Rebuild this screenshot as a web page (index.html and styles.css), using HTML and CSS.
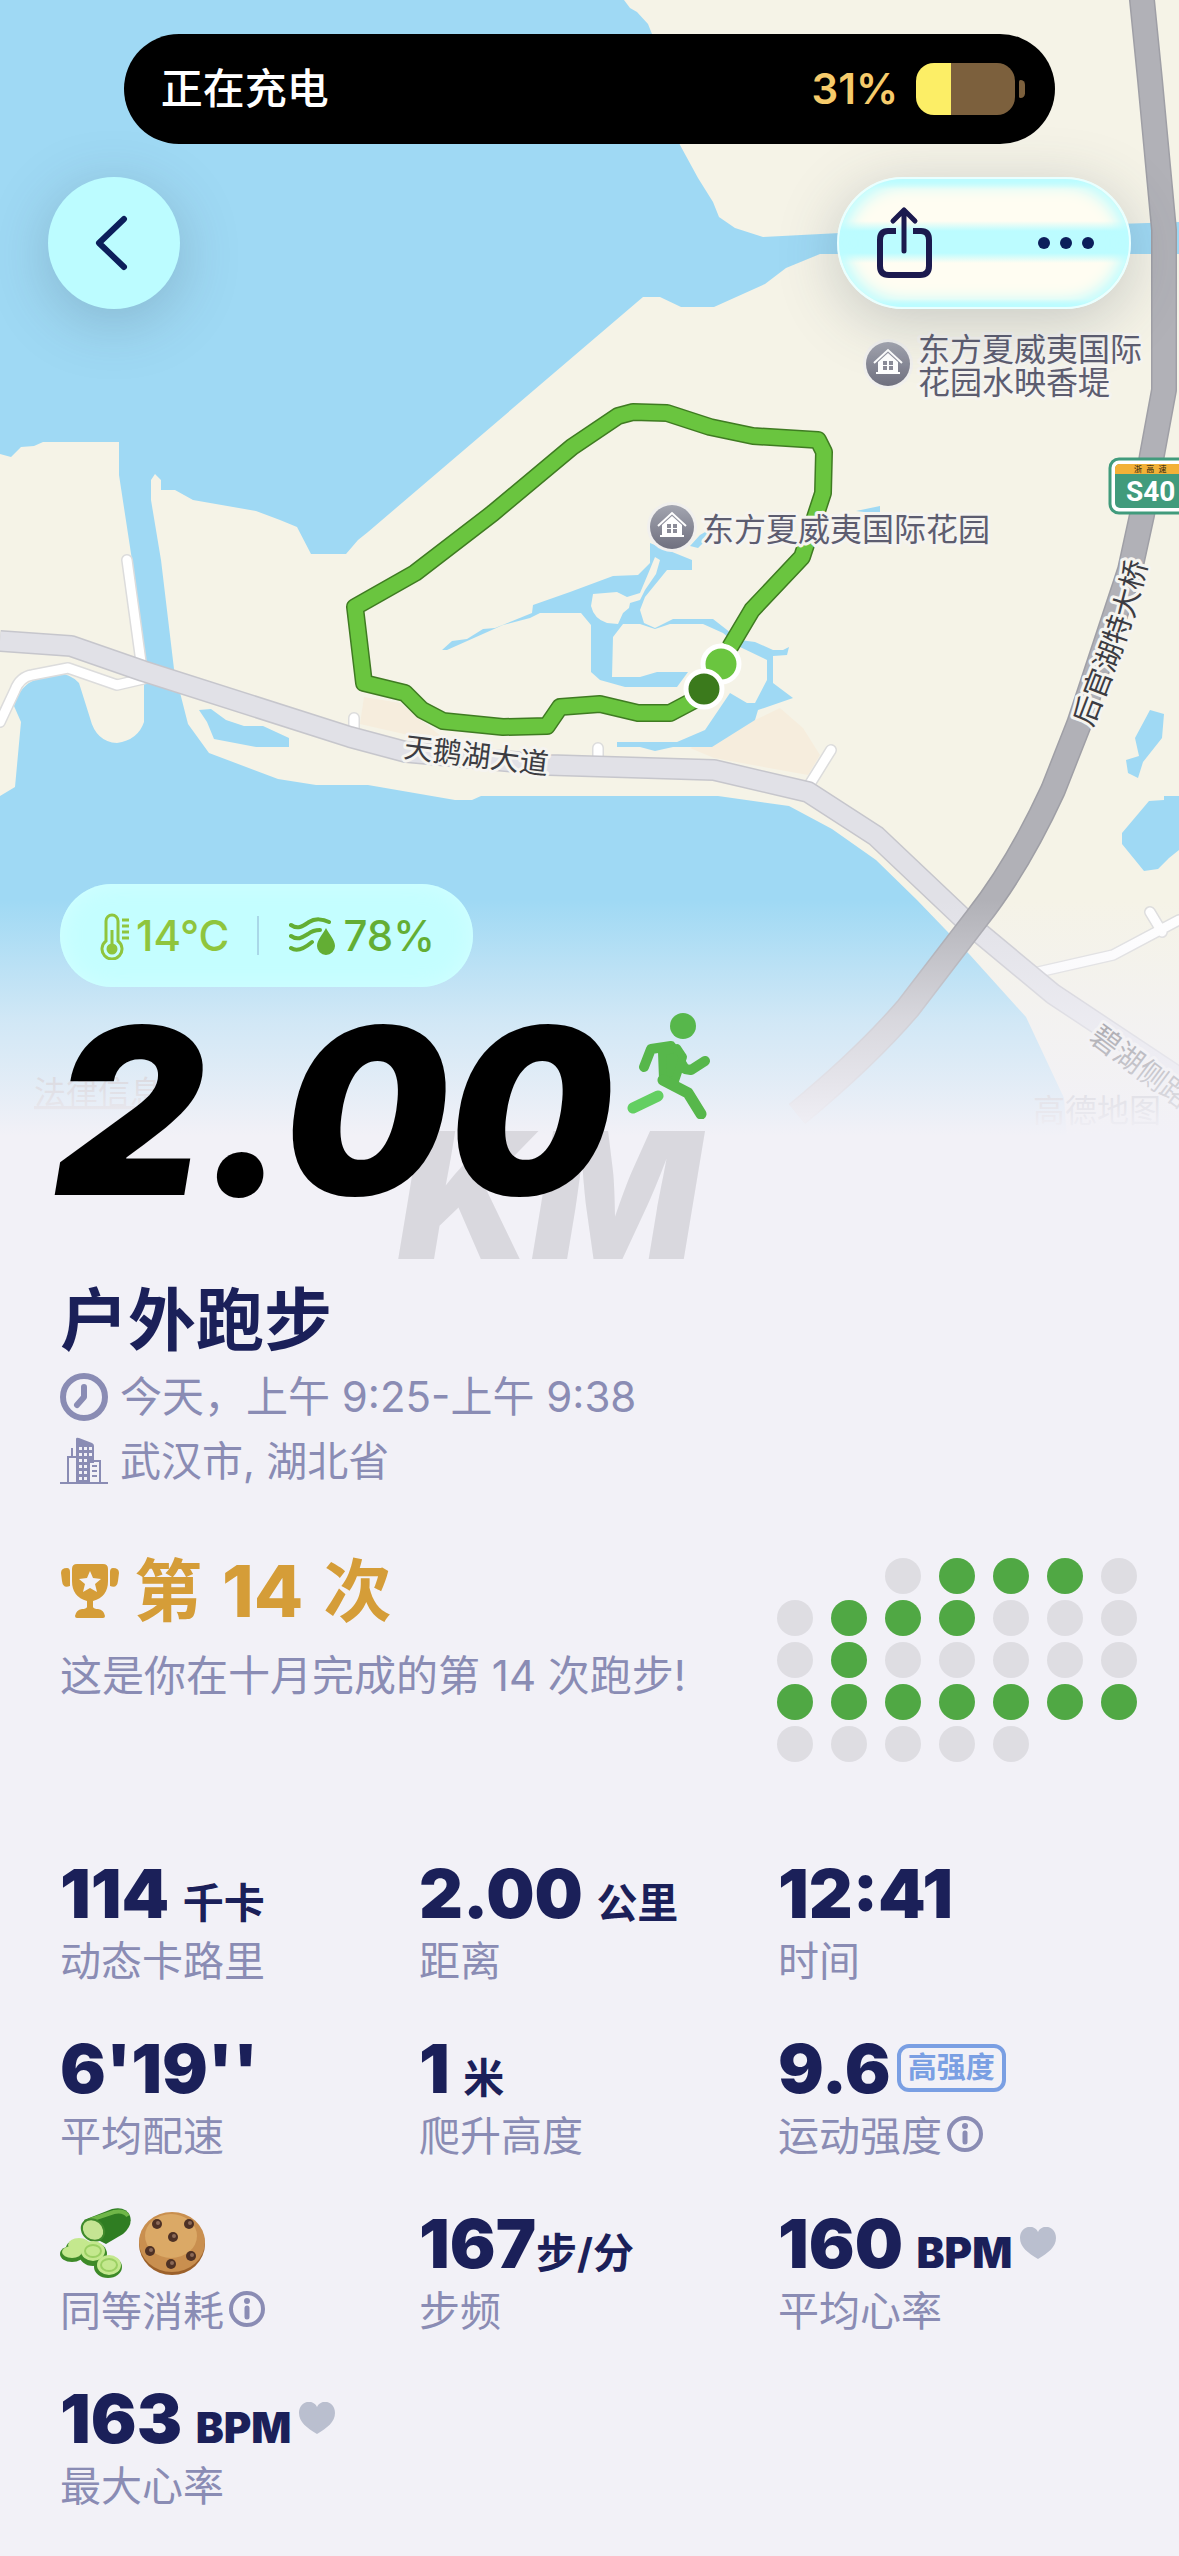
FILE: index.html
```html
<!DOCTYPE html>
<html lang="zh-CN">
<head>
<meta charset="utf-8">
<title>户外跑步</title>
<meta name="viewport" content="width=device-width,initial-scale=1">
<link rel="stylesheet" href="styles.css">
</head>
<body>

<section class="hero">
  <div class="map">
    <svg viewBox="0 0 1179 1180" preserveAspectRatio="xMidYMin slice" role="img" aria-label="跑步路线">
      <defs>
        <linearGradient id="pin" x1="0" y1="0" x2="0" y2="1">
          <stop offset="0" stop-color="#a3a5b0"/><stop offset="1" stop-color="#6f707f"/>
        </linearGradient>
        <path id="bridge" d="M1092 728L1119 658L1136 608L1153 541"/>
        <g id="house">
          <circle r="25" fill="#f1f0ee"/>
          <circle r="22" fill="url(#pin)"/>
          <path d="M-14 -1L0 -14L14 -1" fill="none" stroke="#fff" stroke-width="2"/>
          <path d="M0 -11L10 -2V8H12V10H-12V8H-10V-2Z" fill="#fff"/>
          <path d="M-5 -3h4v4h-4zM1 -3h4v4h-4zM-5 2h4v4h-4zM1 2h4v4h-4z" fill="#8b8c98"/>
        </g>
      </defs>
      <rect class="land" width="1179" height="1180"/>

      <!-- lake and canal -->
      <path class="water" d="M0 0H624L630 8L637 12L648 24L652 34L672 120L680 145L698 178L713 202L719 217L735 228L763 237L840 233L1179 222V254H820L786 268L765 284L714 307H681L660 297H643L368 532L358 540L346 554H311L297 527L280 520L256 511L193 500L175 490H161V480L155 474L151 480V500L161 560L174 669L188 724L209 753L278 779L316 785H368L455 800H472L481 796H718L789 806L832 829L876 860L917 900L970 955L1026 1017L1064 1098L1070 1180H0V796L15 787L21 722L14 706Q20 684 38 679Q62 666 79 683L90 718Q96 742 117 743Q138 740 144 722V655L132 560L119 475V442H43L34 446L21 447L11 457L0 454Z"/>
      <path class="water" d="M199 710L211 709L226 720L244 726H263L289 738V747H256L214 739L207 722Z"/>
      <path class="water" d="M1150 710L1164 714L1162 738L1143 762L1138 778L1128 773L1126 760L1139 756L1135 738Z"/>
      <path class="water" d="M1164 796H1179V850L1169 858L1158 869L1144 871L1122 844V833L1149 801L1164 800Z"/>

      <!-- garden ponds -->
      <path class="sand" d="M364 697L400 703L452 745L360 724Z"/>
      <path class="sand" d="M755 720L780 708L803 728L820 755L808 775L714 758L690 748Z"/>
      <path class="water" d="M442 650L452 641L467 639L483 629L495 628L532 613L533 605L570 592L613 576L638 575L650 563V543L692 560V570H667L645 597L640 610L644 623L655 628L673 619H713L740 640L755 642L773 650H783L789 647L787 655L773 656V683L793 698L758 710L755 720L712 747H673L655 751L640 747H617V742H677L705 730L730 693L747 703H755L767 680V660L740 647L723 633L703 624L670 624L655 629L640 624H623L613 637L612 677H640L657 672H688L677 687H625L600 680L591 672V625L581 613H540L530 618L503 625L447 650Z"/>
      <path class="land" d="M593 594L617 592L627 597L640 593L648 574L655 557L660 560L656 574L645 590L640 600L630 603L629 608L623 613L618 624L607 623Q594 619 591 606Z"/>
      <path class="water" d="M690 546L700 535L712 528L708 538L698 548ZM856 511L880 506V514Z"/>

      <!-- roads -->
      <path class="lane-edge" d="M127 560L141 662M0 722L15 690Q20 677 32 675L68 668L117 685L143 679M354 718V732M598 748V762M831 750L808 787M1034 973L1113 955L1179 920M1150 912L1162 932"/>
      <path class="lane" d="M127 560L141 662M0 722L15 690Q20 677 32 675L68 668L117 685L143 679M354 718V732M598 748V762M831 750L808 787M1034 973L1113 955L1179 920M1150 912L1162 932"/>
      <path class="road-edge" d="M0 641L71 646L143 671L350 737L406 752L549 765L714 770L808 792L876 836L970 925L1053 994L1190 1085"/>
      <path class="road" d="M0 641L71 646L143 671L350 737L406 752L549 765L714 770L808 792L876 836L970 925L1053 994L1190 1085"/>
      <path class="highway-edge" d="M1141 -10L1150 80L1164 230V390L1152 455L1142 515L1130 570L1079 724L1053 790Q1018 866 977 918L908 1008Q865 1058 797 1114"/>
      <path class="highway" d="M1141 -10L1150 80L1164 230V390L1152 455L1142 515L1130 570L1079 724L1053 790Q1018 866 977 918L908 1008Q865 1058 797 1114"/>

      <!-- run track -->
      <path class="track-edge" d="M730 647L752 610L802 557L823 493L824 452L818 440L753 436L710 427L667 413L633 412L618 416L572 447L493 513L415 573L355 607L364 683L405 693L422 710L443 721L503 727L547 726L560 707L600 704L638 713H670L704 695"/>
      <path class="track" d="M730 647L752 610L802 557L823 493L824 452L818 440L753 436L710 427L667 413L633 412L618 416L572 447L493 513L415 573L355 607L364 683L405 693L422 710L443 721L503 727L547 726L560 707L600 704L638 713H670L704 695"/>
      <circle cx="721" cy="664" r="18" fill="#6ac53f" stroke="#fff" stroke-width="5"/>
      <circle cx="704" cy="689" r="18" fill="#3b7a1c" stroke="#fff" stroke-width="5"/>

      <!-- labels -->
      <use href="#house" x="888" y="364"/>
      <use href="#house" x="672" y="527"/>
      <text class="place" x="918" y="361">东方夏威夷国际</text>
      <text class="place" x="918" y="394">花园水映香堤</text>
      <text class="place" x="702" y="541">东方夏威夷国际花园</text>
      <text class="street" transform="translate(403 757) rotate(7)">天鹅湖大道</text>
      <text class="street"><textPath href="#bridge">后官湖特大桥</textPath></text>
      <text class="street" transform="translate(1088 1040) rotate(37)">碧湖侧路</text>
      <rect x="1110" y="459" width="90" height="54" rx="9" fill="#fff" stroke="#419b7c" stroke-width="3"/>
      <rect x="1115" y="464" width="80" height="44" rx="5" fill="#419b7c"/>
      <path d="M1115 474V469Q1115 464 1120 464H1179V474Z" fill="#f3b137"/>
      <text class="shield-top" x="1134" y="472">浙&#160;&#160;高&#160;&#160;速</text>
      <text class="shield" x="1126" y="501">S40</text>
      <text class="legal" x="34" y="1104" text-decoration="underline">法律信息</text>
      <text class="legal" x="1033" y="1122">高德地图</text>
    </svg>
  </div>

  <div class="overlay">
    <div class="island">
      <span>正在充电</span>
      <span class="charge">31%</span>
      <span class="battery"></span>
    </div>

    <nav class="toolbar">
      <button class="glass back" aria-label="返回">
        <svg width="36" height="60" viewBox="0 0 36 60"><path d="M31 6L6 30L31 54" fill="none" stroke="#0c1e5b" stroke-width="6" stroke-linecap="round" stroke-linejoin="round"/></svg>
      </button>
      <div class="glass actions">
        <button aria-label="分享">
          <svg width="58" height="74" viewBox="0 0 58 74" fill="none" stroke="#1b1a4e" stroke-width="6" stroke-linecap="round" stroke-linejoin="round"><path d="M21 25H13Q5 25 5 34V60Q5 69 14 69H45Q54 69 54 60V34Q54 25 46 25H38" stroke-linecap="butt"/><path d="M29 45V4M18 15L29 4L40 15" stroke-width="5"/></svg>
        </button>
        <button aria-label="更多">
          <svg width="58" height="14" viewBox="0 0 58 14" fill="#0c1e5b"><circle cx="7" cy="7" r="6"/><circle cx="29" cy="7" r="6"/><circle cx="51" cy="7" r="6"/></svg>
        </button>
      </div>
    </nav>

    <div class="weather">
      <svg width="32" height="48" viewBox="0 0 32 48" fill="none" stroke="#8fc53d" stroke-width="3"><path d="M6 29V9a6 6 0 0 1 12 0V29a10 10 0 1 1-12 0Z"/><path d="M12 18V36M22 8h7M22 14h7M22 20h7M22 26h7"/><circle cx="12" cy="37" r="4" fill="#8fc53d"/></svg>
      <span class="temp">14°C</span>
      <span class="divider"></span>
      <svg width="48" height="40" viewBox="0 0 48 40"><path d="M2 9C9 14 14 10 20 6S34 3 40 6M2 20C9 25 14 21 19 18Q24 14 31 14M2 32C8 36 16 32 23 26" fill="none" stroke="#63ae34" stroke-width="4" stroke-linecap="round"/><path d="M37 12C40 18 46 24 46 30a9 9 0 0 1-18 0C28 24 34 18 37 12Z" fill="#63ae34"/></svg>
      <span class="humidity">78%</span>
    </div>

    <div class="distance">
      <span class="km">KM</span>
      <span class="value">2.00</span>
      <svg class="runner" width="84" height="106" viewBox="0 0 84 106" fill="none" stroke-linecap="round" stroke-linejoin="round"><path d="M6 95L31 83" stroke="#63cf62" stroke-width="11"/><circle cx="56" cy="13" r="13" fill="#57b74b"/><path d="M17 54L24 36L44 33L58 56L64 57L78 48" stroke="#57b74b" stroke-width="10"/><path d="M35 39L50 35L56 44L48 68L36 66Z" fill="#57b74b" stroke="#57b74b" stroke-width="8"/><path d="M36 67L61 80L74 101" stroke="#57b74b" stroke-width="11"/></svg>
    </div>
  </div>
</section>

<main>
  <header class="summary">
    <h1>户外跑步</h1>
    <p>
      <svg width="48" height="48" viewBox="0 0 48 48" fill="none" stroke="#8a8cb4" stroke-linecap="round" stroke-linejoin="round"><circle cx="24" cy="24" r="21" stroke-width="6"/><path d="M24 14V24L17 32" stroke-width="6"/></svg>
      <span>今天，上午 9:25-上午 9:38</span>
    </p>
    <p>
      <svg width="48" height="48" viewBox="0 0 48 48"><path d="M0 46H48M8 46V20H17M12 20V11M31 24H40V46" fill="none" stroke="#8a8cb4" stroke-width="2"/><path d="M16 46V2Q16 0 19 1L32 6Q34 7 34 9V46ZM19 10v3h3v-3zM24 10v3h3v-3zM29 10v3h3v-3zM19 16v3h3v-3zM24 16v3h3v-3zM29 16v3h3v-3zM19 22v3h3v-3zM24 22v3h3v-3zM19 28v3h3v-3zM24 28v3h3v-3zM19 34v3h3v-3zM24 34v3h3v-3zM19 40v3h3v-3zM24 40v3h3v-3z" fill="#8a8cb4" fill-rule="evenodd"/><path d="M30 26h9v19h-9z" fill="#f2f1f7"/><path d="M32 29h5M32 34h5M32 39h5" stroke="#8a8cb4" stroke-width="2"/></svg>
      <span class="city">武汉市, 湖北省</span>
    </p>
  </header>

  <section class="award">
    <div>
      <h2>
        <svg width="60" height="56" viewBox="0 0 60 56" fill="#d59d38"><path d="M17 1H43Q48 1 48 6V18Q48 34 33 38V44Q34 46 38 46Q44 47 45 53Q45 55 43 55H17Q15 55 15 53Q16 47 22 46Q26 46 27 44V38Q12 34 12 18V6Q12 1 17 1Z"/><path d="M7 5Q10 5 10 9V23Q3 26 2 18L1 10Q1 5 7 5ZM53 5Q50 5 50 9V23Q57 26 58 18L59 10Q59 5 53 5Z"/><path d="M30 8L33 15L41 16L35 21L37 29L30 25L23 29L25 21L19 16L27 15Z" fill="#f2f1f7"/></svg>
        第 <b>14</b> 次
      </h2>
      <p>这是你在十月完成的第 14 次跑步!</p>
    </div>
    <div class="calendar">
      <i class="first"></i><i class="on"></i><i class="on"></i><i class="on"></i><i></i>
      <i></i><i class="on"></i><i class="on"></i><i class="on"></i><i></i><i></i><i></i>
      <i></i><i class="on"></i><i></i><i></i><i></i><i></i><i></i>
      <i class="on"></i><i class="on"></i><i class="on"></i><i class="on"></i><i class="on"></i><i class="on"></i><i class="on"></i>
      <i></i><i></i><i></i><i></i><i></i>
    </div>
  </section>

  <dl class="stats">
    <div><dd>114 <small>千卡</small></dd><dt>动态卡路里</dt></div>
    <div><dd>2.00 <small>公里</small></dd><dt>距离</dt></div>
    <div><dd>12:41</dd><dt>时间</dt></div>
    <div><dd>6'19''</dd><dt>平均配速</dt></div>
    <div><dd>1 <small>米</small></dd><dt>爬升高度</dt></div>
    <div>
      <dd>9.6<span class="tag">高强度</span></dd>
      <dt>运动强度<button class="info" aria-label="说明"><svg width="36" height="36" viewBox="0 0 36 36"><circle cx="18" cy="18" r="16" fill="none" stroke="#8a8cb4" stroke-width="4"/><circle cx="18" cy="10" r="3" fill="#8a8cb4"/><path d="M18 17V26" stroke="#8a8cb4" stroke-width="5" stroke-linecap="round"/></svg></button></dt>
    </div>
    <div>
      <dd class="food">
        <svg width="72" height="70" viewBox="0 0 72 70">
          <path d="M24 12L52 1Q66 -2 70 8Q73 17 63 26L46 36L34 30Z" fill="#2f7d22"/>
          <path d="M30 12L54 4Q64 2 68 8" fill="none" stroke="#6fb648" stroke-width="4"/>
          <ellipse cx="33" cy="22" rx="12" ry="10" transform="rotate(40 33 22)" fill="#c5e493" stroke="#3f8a2c" stroke-width="2"/>
          <g fill="#3d8a28"><ellipse cx="12" cy="46" rx="12" ry="8"/><ellipse cx="19" cy="40" rx="13" ry="9"/><ellipse cx="33" cy="46" rx="14" ry="12"/><ellipse cx="48" cy="59" rx="14" ry="11"/></g>
          <g fill="#c4e88e"><ellipse cx="12" cy="44" rx="10" ry="6"/><ellipse cx="19" cy="37" rx="11" ry="7"/><ellipse cx="33" cy="43" rx="12" ry="10"/><ellipse cx="49" cy="57" rx="12" ry="10"/></g>
          <g fill="none" stroke="#9bd063" stroke-width="2"><ellipse cx="33" cy="43" rx="8" ry="6"/><ellipse cx="49" cy="57" rx="8" ry="6"/></g>
        </svg>
        <svg width="68" height="66" viewBox="0 0 68 66"><ellipse cx="34" cy="34" rx="33" ry="31" fill="#9c612b"/><ellipse cx="34" cy="32" rx="33" ry="30" fill="#c98f4f"/><ellipse cx="33" cy="26" rx="26" ry="22" fill="#dba966"/><g fill="#4e3125"><circle cx="19" cy="14" r="5"/><circle cx="51" cy="14" r="5"/><circle cx="35" cy="27" r="5"/><circle cx="12" cy="41" r="5"/><circle cx="53" cy="46" r="5"/><circle cx="33" cy="54" r="5"/></g><g fill="#8c6a58"><circle cx="20" cy="13" r="2"/><circle cx="52" cy="13" r="2"/><circle cx="36" cy="26" r="2"/><circle cx="13" cy="40" r="2"/><circle cx="54" cy="45" r="2"/><circle cx="34" cy="53" r="2"/></g></svg>
      </dd>
      <dt>同等消耗<button class="info" aria-label="说明"><svg width="36" height="36" viewBox="0 0 36 36"><circle cx="18" cy="18" r="16" fill="none" stroke="#8a8cb4" stroke-width="4"/><circle cx="18" cy="10" r="3" fill="#8a8cb4"/><path d="M18 17V26" stroke="#8a8cb4" stroke-width="5" stroke-linecap="round"/></svg></button></dt>
    </div>
    <div><dd>167<small>步/分</small></dd><dt>步频</dt></div>
    <div>
      <dd>160 <small class="bpm">BPM</small><svg class="heart" width="36" height="32" viewBox="0 0 36 32"><path d="M18 32C8 26 0 20 0 11C0 -1 14 -4 18 5C22 -4 36 -1 36 11C36 20 28 26 18 32Z" fill="#babfcf"/></svg></dd>
      <dt>平均心率</dt>
    </div>
    <div>
      <dd>163 <small class="bpm">BPM</small><svg class="heart" width="36" height="32" viewBox="0 0 36 32"><path d="M18 32C8 26 0 20 0 11C0 -1 14 -4 18 5C22 -4 36 -1 36 11C36 20 28 26 18 32Z" fill="#babfcf"/></svg></dd>
      <dt>最大心率</dt>
    </div>
  </dl>
</main>

</body>
</html>
```
FILE: styles.css
```css
:root{--ink:#1b2059;--muted:#8a8cb4;--bg:#f2f1f7;--green:#50a844;--gold:#d59d38}
*{box-sizing:border-box}
body{margin:0;background:var(--bg);color:var(--ink);
     font:500 42px/1 Inter,"Noto Sans CJK SC",sans-serif}
h1,h2,p,dl,dd{margin:0}
button{padding:0;border:0;background:none;cursor:pointer}
svg{flex:none;display:block}

/* map and everything that floats over it */
.hero{display:grid}
.map,.overlay{grid-area:1/1;min-width:0}
.map{position:relative;overflow:hidden;height:1180px}
.map svg{width:100%;height:100%}
.map::after{content:"";position:absolute;inset:0;
  background:linear-gradient(#f2f1f700 900px,#f2f1f799 1020px,#f2f1f7cc 1080px,var(--bg) 1136px)}
.overlay{position:relative;display:flex;flex-direction:column}
.land{fill:#f5f3e7}
.water{fill:#9fd9f4}
.sand{fill:#f6eddd}
.lane-edge,.lane,.road-edge,.road,.highway-edge,.highway,.track-edge,.track{fill:none;stroke-linejoin:round}
.lane-edge{stroke:#dcdcdc;stroke-width:12;stroke-linecap:round}
.lane{stroke:#fff;stroke-width:9;stroke-linecap:round}
.road-edge{stroke:#c6c6cc;stroke-width:22}
.road{stroke:#e1e1e7;stroke-width:19}
.highway-edge{stroke:#9f9fa6;stroke-width:26}
.highway{stroke:#b1b1b7;stroke-width:23}
.track-edge{stroke:#3f7b22;stroke-width:18}
.track{stroke:#6ac53f;stroke-width:15}
.place,.street{paint-order:stroke;stroke:#f5f4f0;stroke-width:6;stroke-linejoin:round;font-weight:400}
.place{font-size:32px;fill:#5d5d70}
.street{font-size:29px;fill:#3c3c42}
.shield{font:700 28px Roboto,sans-serif;fill:#fff}
.shield-top{font-size:8px;fill:#4d3b16}
.legal{font-size:32px;font-weight:400;fill:#85878d}

.island{display:flex;align-items:center;width:79%;height:110px;margin:34px auto 33px;
  padding:0 32px 0 37px;border-radius:55px;background:#000;color:#fff}
.charge{margin-left:auto;color:#f6cb6b;font-weight:600}
.battery{position:relative;width:99px;height:52px;margin:0 8px 0 18px;border-radius:18px;
  background:linear-gradient(90deg,#fcee66 35%,#7c603d 35%)}
.battery::after{content:"";position:absolute;left:103px;top:17px;width:6px;height:18px;
  border-radius:2px 6px 6px 2px;background:#7c603d}

.toolbar{display:flex;justify-content:space-between;padding:0 48px}
.glass{display:flex;align-items:center;height:132px;border-radius:66px;background:#bcfcff;
  box-shadow:0 12px 60px #3a4a5a40}
.back{justify-content:center;width:132px;padding-right:6px}
.actions{justify-content:space-between;width:294px;padding:0 34px 0 36px;border:2px solid #e9ffff;
  background:linear-gradient(#bcfcff 2px,#fffdf2 10px,#fffdf2 42px,#bcfcff 52px,#bcfcff 74px,#fffdf2 84px,#fffdf2 120px,#bcfcff 126px);
  box-shadow:0 12px 60px #3a4a5a40,inset 0 0 16px 6px #bcfcff}

.weather{display:flex;align-items:center;align-self:flex-start;height:103px;margin:575px 0 0 60px;
  padding:0 38px 0 40px;border-radius:52px;background:#c4feff;box-shadow:inset 0 0 24px #d2ffff}
.temp{margin-left:4px;color:#8fc53d}
.divider{width:2px;height:39px;margin:0 30px 0 28px;background:#a9d8e8}
.humidity{margin-left:6px;color:#63ae34}

.distance{position:relative;display:flex;align-items:flex-start;margin:22px 0 0 54px;height:267px}
.value,.km{font-style:italic;font-weight:900}
.value{position:relative;font-size:232px;line-height:204px;color:#000}
.km{position:absolute;left:344px;top:98px;font-size:176px;line-height:176px;color:#d9d8de}
.runner{position:relative;margin:4px 0 0 14px}

main{padding:0 42px 40px 60px}
h1{font-size:68px;line-height:89px}
.summary p{display:flex;align-items:center;gap:12px;height:64px;color:var(--muted);font-weight:400}
.summary .city{font-size:41px}

.award{display:flex;justify-content:space-between;padding-top:56px}
.award h2{display:flex;align-items:center;gap:14px;height:84px;font-size:68px;color:var(--gold)}
.award b{margin:0 6px;font-size:72px;font-weight:800}
.award p{margin-top:20px;color:var(--muted);line-height:46px;font-weight:400}
.calendar{display:grid;grid-template-columns:repeat(7,36px);gap:6px 18px;align-content:start;padding-top:9px}
.calendar i{height:36px;border-radius:50%;background:#dedde2}
.calendar .first{grid-column:3}
.calendar .on{background:var(--green)}

.stats{display:grid;grid-template-columns:repeat(3,1fr);gap:38px 0;margin-top:91px}
.stats>div{display:flex;flex-direction:column}
.stats dd{display:flex;align-items:baseline;height:80px;font-size:68px;font-weight:900;line-height:80px;white-space:pre}
.stats small{font-size:41px;font-weight:700}
.stats .bpm{font-size:42px;font-weight:900}
.stats dt{display:flex;align-items:center;height:57px;color:var(--muted);font-size:41px;font-weight:400}
.tag{align-self:center;margin-left:6px;padding:0 7px;border:4px solid #7a9fe3;border-radius:12px;
  color:#7a9fe3;font-size:29px;font-weight:700;line-height:40px}
.info{margin:-6px 0 0 5px}
.heart{align-self:center;margin-left:8px}
.food{gap:6px}
.stats .food{align-items:center}
```
